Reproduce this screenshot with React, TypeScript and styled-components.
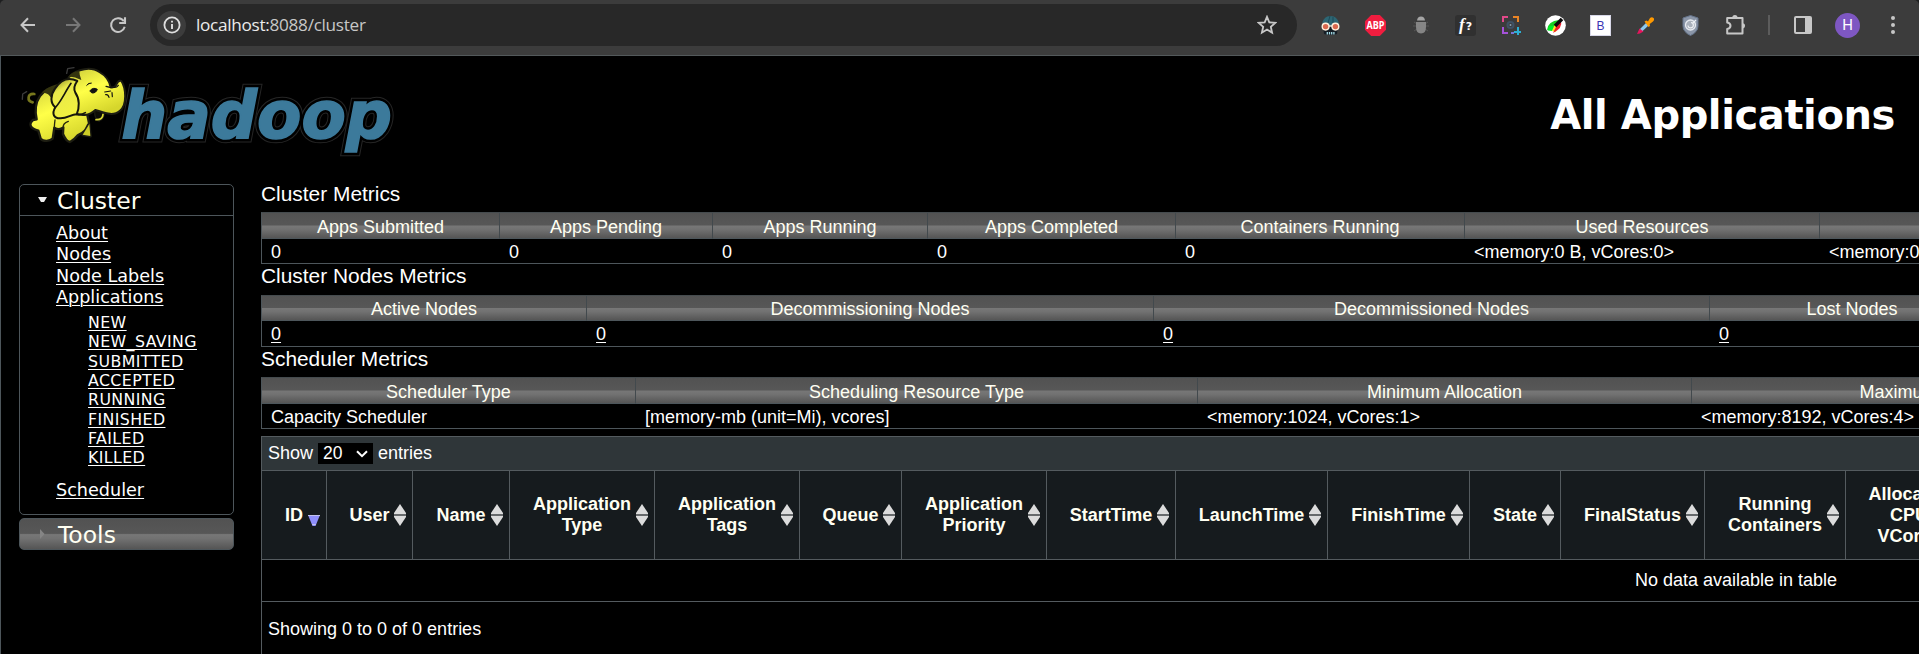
import React from "react";
import styled, { createGlobalStyle } from "styled-components";

const ARIAL = '"Liberation Sans", Arial, sans-serif';
const VERDANA = '"DejaVu Sans", Verdana, sans-serif';
const LINE = "#4d565b";
const GLOSS = "linear-gradient(#525252 0%, #575757 48%, #777 52%, #727272 65%, #555 100%)";

const GlobalStyle = createGlobalStyle`
  *, *::before, *::after { box-sizing: border-box; }
  body { margin: 0; background: #000; color: #fff; overflow: hidden; }
`;

const Window = styled.div`
  width: 1919px;
  height: 654px;
  overflow: hidden;
  display: flex;
  flex-direction: column;
  background: #000;
`;

/* ---------- browser bar ---------- */

const BarBackdrop = styled.div`
  flex: none;
  background: #1e1f20;
`;

const BrowserBar = styled.div`
  height: 55px;
  padding: 0 4px 5px 5px;
  display: flex;
  align-items: center;
  background: #3c3c3c;
  border-radius: 5px 5px 0 0;
`;

const Slot = styled.div<{ $w?: number }>`
  width: ${(p) => p.$w ?? 45}px;
  flex: none;
  display: flex;
  align-items: center;
  justify-content: center;
  svg { display: block; }
`;

const AddressField = styled.div`
  width: 1147px;
  height: 42px;
  margin: 0 11px 0 10px;
  padding: 0 20px 0 7px;
  border-radius: 21px;
  background: #282828;
  display: flex;
  align-items: center;
`;

const SiteInfo = styled.div`
  width: 29px;
  height: 29px;
  border-radius: 50%;
  background: #3c3c3c;
  display: flex;
  align-items: center;
  justify-content: center;
`;

const Url = styled.span`
  flex: 1;
  margin-left: 10px;
  font: 17.2px/24px "Open Sans", "Noto Sans", sans-serif;
  letter-spacing: -0.3px;
  color: #c7c7c7;
  span { color: #ececec; }
`;

const Divider = styled.div`
  width: 2px;
  height: 20px;
  background: #5c5c5c;
`;

const Avatar = styled.div`
  width: 25px;
  height: 25px;
  border-radius: 50%;
  background: #7e57c2;
  color: #fff;
  font: 15px/25px Roboto, sans-serif;
  text-align: center;
`;

const LetterTile = styled.div`
  width: 21px;
  height: 21px;
  background: #fff;
  border: 1px solid #d8d8e8;
  color: #3a35b5;
  font: 12px/20px ${ARIAL};
  text-align: center;
`;

const FontTile = styled.div`
  width: 21px;
  height: 21px;
  border-radius: 3px;
  background: #303030;
  color: #fff;
  font: italic bold 17px/19px "Liberation Serif", serif;
  text-align: center;
  span { font: bold 11px/19px "DejaVu Sans", sans-serif; margin-left: 1px; }
`;

/* ---------- page ---------- */

const Page = styled.div`
  flex: 1;
  border-top: 1px solid #53595b;
  border-left: 1px solid ${LINE};
  overflow: hidden;
`;

const Header = styled.header`
  height: 128px;
  padding: 4px 24px 0 19px;
  display: flex;
  justify-content: space-between;
  align-items: flex-start;
`;

const Title = styled.h1`
  margin: 31px 0 0;
  font: bold 40px/48px ${VERDANA};
  letter-spacing: -0.4px;
  white-space: nowrap;
`;

const Columns = styled.div`
  display: flex;
  align-items: flex-start;
  padding-left: 18px;
`;

const Sidebar = styled.nav`
  width: 215px;
  flex: none;
  margin-right: 27px;
  font-family: ${VERDANA};
`;

const Panel = styled.div`
  height: 331px;
  margin-bottom: 3px;
  border: 1px solid ${LINE};
  border-radius: 5px;
`;

const PanelHead = styled.div<{ $closed?: boolean }>`
  height: ${(p) => (p.$closed ? 32 : 31)}px;
  padding-left: ${(p) => (p.$closed ? 19 : 18)}px;
  display: flex;
  align-items: center;
  gap: ${(p) => (p.$closed ? 13 : 10)}px;
  font-size: 23.5px;
  color: #fffff2;
  border: ${(p) => (p.$closed ? `1px solid ${LINE}` : "0")};
  border-bottom: 1px solid ${LINE};
  border-radius: ${(p) => (p.$closed ? "5px" : "0")};
  background: ${(p) => (p.$closed ? GLOSS : "none")};
  span { padding-top: 2px; }
`;

const LinkList = styled.ul<{ $nested?: boolean }>`
  margin: 0;
  list-style: none;
  padding: ${(p) => (p.$nested ? "5px 0 12px 32px" : "7px 0 0 36px")};
  font-size: ${(p) => (p.$nested ? 15.8 : 17.6)}px;
  line-height: ${(p) => (p.$nested ? 19.3 : 21.3)}px;
  letter-spacing: ${(p) => (p.$nested ? 0.4 : 0)}px;
`;

const PageLink = styled.a`
  color: #fff;
  text-decoration: underline;
  text-decoration-thickness: 1px;
  text-underline-offset: 2px;
`;

const Main = styled.main`
  width: 2950px;
  flex: none;
  font: 18px/21px ${ARIAL};
`;

const SectionTitle = styled.div<{ $h: number; $line: number }>`
  height: ${(p) => p.$h}px;
  font-size: 20.9px;
  line-height: ${(p) => p.$line}px;
`;

const Metrics = styled.div<{ $cols: string }>`
  display: grid;
  grid-template-columns: ${(p) => p.$cols};
  border: 1px solid ${LINE};
  border-top-color: #454b4e;
`;

const MetricHead = styled.div<{ $h: number }>`
  height: ${(p) => p.$h}px;
  padding-top: ${(p) => (p.$h > 25 ? 3 : 2)}px;
  display: flex;
  align-items: center;
  justify-content: center;
  background: ${GLOSS};
  color: #fffff2;
  border-right: 1px solid #42494d;
  border-bottom: 1px solid ${LINE};
  white-space: nowrap;
`;

const MetricCell = styled.div<{ $h: number }>`
  height: ${(p) => p.$h}px;
  padding: 2px 0 0 9px;
  display: flex;
  align-items: center;
  white-space: nowrap;
`;

const AppsTable = styled.div`
  margin-top: 7px;
  border: 1px solid #545b5f;
  height: 260px;
`;

const Toolbar = styled.div`
  height: 34px;
  padding-left: 6px;
  display: flex;
  align-items: center;
  gap: 5px;
  background: #2f3639;
  border-bottom: 1px solid #545b5f;
`;

const PageSize = styled.div`
  width: 55px;
  height: 21px;
  padding: 0 5px;
  display: flex;
  align-items: center;
  justify-content: space-between;
  background: #000;
  font-size: 17.5px;
`;

const AppsHead = styled.div`
  display: flex;
  height: 89px;
  background: #161b1e;
  border-bottom: 1px solid #545b5f;
`;

const AppsHeadCell = styled.div<{ $w: number }>`
  position: relative;
  width: ${(p) => p.$w}px;
  flex: none;
  display: flex;
  align-items: center;
  justify-content: center;
  border-right: 1px solid #545b5f;
  color: #fffff2;
  font-weight: bold;
  text-align: center;
  white-space: pre;
`;

const SortMark = styled.svg`
  position: absolute;
  right: 6px;
  top: 33px;
`;

const EmptyRow = styled.div`
  height: 42px;
  display: flex;
  align-items: center;
  justify-content: center;
  border-bottom: 1px solid #545b5f;
`;

const TableInfo = styled.div`
  padding: 17px 0 0 6px;
`;

/* ---------- drawings ---------- */

const LogoDrawing = styled.svg`
  display: block;
  overflow: visible;
`;

const HadoopLogo = () => (
  <LogoDrawing width="374" height="100" viewBox="60 180 1122 300">
    <defs>
      <linearGradient id="hide" x1="0" y1="0" x2="0.5" y2="1">
        <stop offset="0" stopColor="#c9c93a" />
        <stop offset="0.5" stopColor="#ffff48" />
        <stop offset="1" stopColor="#d6d62c" />
      </linearGradient>
      <linearGradient id="ear" x1="0" y1="0" x2="0.4" y2="1">
        <stop offset="0" stopColor="#77771f" />
        <stop offset="0.35" stopColor="#e9e94a" />
        <stop offset="1" stopColor="#f2f240" />
      </linearGradient>
    </defs>
    <g fontFamily="DejaVu Sans" fontWeight="bold" fontStyle="italic" fontSize="200" strokeLinejoin="miter">
      <text x="364" y="414" textLength="812" lengthAdjust="spacingAndGlyphs" fill="none" stroke="#262626" strokeWidth="26">hadoop</text>
      <text x="364" y="414" textLength="812" lengthAdjust="spacingAndGlyphs" fill="none" stroke="#000" strokeWidth="20">hadoop</text>
      <text x="364" y="414" textLength="812" lengthAdjust="spacingAndGlyphs" fill="#3c7a9b" stroke="#3c7a9b" strokeWidth="5">hadoop</text>
    </g>
    <g strokeLinejoin="round" strokeLinecap="round">
      <path d="M200 220 L203 206 L222 203 M67 298 L68 282 L80 275" fill="none" stroke="#3b3b3b" strokeWidth="4" />
      <path d="M103 282 C82 280 80 303 98 307" fill="none" stroke="#77771c" strokeWidth="8" />
      <path d="M180 262 C125 258 98 305 110 358 L99 360 C85 372 90 385 115 392 L122 416 C130 426 150 424 158 416 L163 383 Q178 392 190 382 L189 402 Q198 424 210 426 Q222 420 234 405 Q258 396 265 373 L248 405 L272 409 L268 374 L262 345 L285 325 L300 250 Z" fill="url(#hide)" stroke="#1d1d12" strokeWidth="7" />
      <path d="M268 372 L248 404 L271 408 Z" fill="#cccc27" />
      <path d="M125 278 C146 256 172 252 196 248 C175 262 160 276 152 292 C147 281 136 278 125 278 Z" fill="#35350f" />
      <path d="M284 328 Q283 362 298 363 Q314 356 312 338 Z" fill="#0d0d06" stroke="#1d1d12" strokeWidth="4" />
      <path d="M288 359 Q308 360 309 343" fill="none" stroke="#dada35" strokeWidth="5" />
      <path d="M206 232 C232 204 275 200 298 216 C316 226 328 242 332 262 Q346 264 350 252 Q355 240 364 243 C378 264 382 314 360 332 C338 352 308 336 286 330 C268 347 242 350 225 338 C205 300 200 258 206 232 Z" fill="url(#hide)" stroke="#1d1d12" strokeWidth="6" />
      <path d="M205 230 Q218 213 238 214 Q238 226 244 240 Q223 229 205 230 Z" fill="#35350f" />
      <path d="M232 243 C205 230 182 240 165 266 C150 287 151 310 166 322 C154 342 162 356 182 355 C203 355 213 343 230 343 C239 323 239 296 226 278 C220 266 225 252 232 243 Z" fill="url(#ear)" stroke="#17170d" strokeWidth="6" />
      <path d="M166 322 C180 310 194 278 213 250 M229 343 Q244 346 256 338" fill="none" stroke="#17170d" strokeWidth="5" />
      <path d="M270 272 Q280 260 292 268 Q288 280 277 279 Z M260 256 Q265 248 274 249" fill="#111" stroke="#111" strokeWidth="3" />
      <path d="M318 259 L333 263 M314 276 L332 273 M317 284 Q324 282 327 292 M337 290 L336 278 M339 262 Q350 264 355 256" fill="none" stroke="#111" strokeWidth="3.5" />
      <path d="M165 360 Q163 375 163 383 M190 382 Q188 370 205 364" fill="none" stroke="#25250e" strokeWidth="4" />
    </g>
  </LogoDrawing>
);

const Arrow = ({ flip, color }: { flip?: boolean; color: string }) => (
  <svg width="16" height="16" viewBox="0 0 16 16" transform={flip ? "scale(-1 1)" : undefined}>
    <path d="M15 8H2M8 1.3L1.5 8L8 14.7" fill="none" stroke={color} strokeWidth="2" />
  </svg>
);

const Reload = () => (
  <svg width="18" height="18" viewBox="0 0 18 18">
    <path d="M14.8 5.3A6.9 6.9 0 1 0 15.7 10.8" fill="none" stroke="#c7c7c7" strokeWidth="2" />
    <path d="M16 1.2V7H10.2" fill="none" stroke="#c7c7c7" strokeWidth="2.1" />
  </svg>
);

const Info = () => (
  <svg width="18" height="18" viewBox="0 0 18 18">
    <circle cx="9" cy="9" r="7.6" fill="none" stroke="#dedede" strokeWidth="1.8" />
    <path d="M9 8V13M9 4.7V6.6" stroke="#dedede" strokeWidth="1.9" />
  </svg>
);

const Star = () => (
  <svg width="20" height="20" viewBox="0 0 20 20">
    <path d="M10 1.8L12.3 7.3L18.3 7.8L13.8 11.8L15.1 17.7L10 14.5L4.9 17.7L6.2 11.8L1.7 7.8L7.7 7.3Z" fill="none" stroke="#c7c7c7" strokeWidth="1.8" />
  </svg>
);

const Masked = () => (
  <svg width="21" height="21" viewBox="0 0 21 21">
    <path d="M2 11C2 4 6 1 10.5 1S19 4 19 11Z" fill="#2d6674" />
    <path d="M3 11H18L17 19Q10.5 21 4 19Z" fill="#151d25" />
    <path d="M10 1L8 8M13 2V8" stroke="#1d4b57" />
    <circle cx="5.6" cy="11.6" r="3.4" fill="#d9694f" stroke="#fff0db" strokeWidth="1.4" />
    <circle cx="15.4" cy="11.6" r="3.4" fill="#d9694f" stroke="#fff0db" strokeWidth="1.4" />
    <path d="M9 11H12" stroke="#fff0db" strokeWidth="1.3" />
    <path d="M7.3 17V19.5M9.5 17V19.5M11.7 17V19.5M13.9 17V19.5" stroke="#a6dce6" strokeWidth="1.3" />
  </svg>
);

const AdBlock = () => (
  <svg width="21" height="21" viewBox="0 0 21 21">
    <path d="M6.2 0H14.8L21 6.2V14.8L14.8 21H6.2L0 14.8V6.2Z" fill="#f01d3f" />
    <text x="10.5" y="14.4" textAnchor="middle" textLength="18" lengthAdjust="spacingAndGlyphs" fontFamily="Open Sans" fontWeight="bold" fontSize="11" fill="#fff">ABP</text>
  </svg>
);

const Bug = () => (
  <svg width="18" height="18" viewBox="0 0 18 18">
    <path d="M2 6L5 8M1 10H4M2 15L5 13M16 6L13 8M17 10H14M16 15L13 13" stroke="#555" />
    <path d="M5 4.5Q5.5 .5 9 .5T13 4.5Z" fill="#a5a5a5" />
    <path d="M4 6H14V11Q14 17.5 9 17.5T4 11Z" fill="#858585" />
  </svg>
);

const Capture = () => (
  <svg width="20" height="20" viewBox="0 0 20 20" fill="none" strokeWidth="2">
    <path d="M2 7V2H7" stroke="#e2498a" />
    <path d="M12 2H17V7" stroke="#ea8425" />
    <path d="M2 12V18H7" stroke="#a552d8" />
    <path d="M10 18H13" stroke="#7773d9" />
    <path d="M17 12V20M13 17H20" stroke="#2daed3" />
    <circle cx="9.5" cy="10" r="3" stroke="#3f5265" />
    <circle cx="9.5" cy="10" r="1" fill="#8aa0b5" stroke="none" />
  </svg>
);

const ColorDisc = () => (
  <svg width="21" height="21" viewBox="0 0 21 21">
    <circle cx="10.5" cy="10.5" r="10.3" fill="#fff" />
    <path d="M2 15Q3 6 14 5L8 14Z" fill="#16cf22" />
    <path d="M2.5 15.5L4 11L10 11L7 16Z" fill="#00ef28" />
    <path d="M7 16L10 9L14 6L11 17Z" fill="#ffe320" />
    <path d="M8 18L11 12L16 6Q18 13 8 18Z" fill="#ee1d2d" />
    <path d="M10 11L17 4" stroke="#090909" strokeWidth="3.5" />
  </svg>
);

const Dropper = () => (
  <svg width="17" height="17" viewBox="0 0 17 17">
    <path d="M2 13L9 6L11.5 8.5L4.5 15Z" fill="#8bc8ef" />
    <path d="M0 17L2.5 11.5L6.5 14.5L3 16.5Z" fill="#e5155c" />
    <path d="M7.5 4.5L9.5 3.5L11 4.5L13 1Q15-.5 16.5 1T16 4.5L12.7 7L13 9L11.5 10Z" fill="#ff9900" />
  </svg>
);

const Shield = () => (
  <svg width="17" height="21" viewBox="0 0 17 21">
    <path d="M8.5 .5L16 3V11Q16 17 8.5 20.5Q1 17 1 11V3Z" fill="#8b96a8" stroke="#66758c" />
    <circle cx="8.5" cy="10" r="5" fill="#a9b0bb" stroke="#e7eaf0" strokeWidth="1.3" />
    <path d="M6 10.5A2.7 2.7 0 1 0 9 7.5M11 8L14 5" fill="none" stroke="#eef0f4" strokeWidth="1.2" />
  </svg>
);

const Puzzle = () => (
  <svg width="22" height="22" viewBox="0 0 22 22">
    <path d="M2.2 4H17.5V19.5H2.2V15Q5.5 14.5 5.5 11.8T2.2 8.5Z" fill="none" stroke="#c7c7c7" strokeWidth="2" strokeLinejoin="round" />
    <path d="M7.3 3.5A2.6 2.6 0 0 1 12.5 3.5ZM18 9.3A2.6 2.6 0 0 1 18 14.4Z" fill="#c7c7c7" />
  </svg>
);

const SidePanel = () => (
  <svg width="18" height="18" viewBox="0 0 18 18">
    <rect x="1" y="1" width="16" height="16" rx="1" fill="none" stroke="#c7c7c7" strokeWidth="2" />
    <path d="M11 1H17V17H11Z" fill="#c7c7c7" />
  </svg>
);

const Dots = () => (
  <svg width="4" height="18" viewBox="0 0 4 18" fill="#c7c7c7">
    <circle cx="2" cy="2" r="2" />
    <circle cx="2" cy="9" r="2" />
    <circle cx="2" cy="16" r="2" />
  </svg>
);

const Sort = ({ active }: { active?: boolean }) => (
  <SortMark width="12" height="22" viewBox="0 0 12 22">
    {active ? (
      <>
        <path d="M0 11H12L7.5 22H4.5Z" fill="#8f8ffb" />
        <path d="M0 11.5H12M4.2 20.5H7.8" stroke="#c2c2ee" />
      </>
    ) : (
      <>
        <path d="M6 0L12 9V13L6 22L0 13V9Z" fill="#dcdcdc" />
        <path d="M0 11H12" stroke="#66696b" strokeWidth="2" />
      </>
    )}
  </SortMark>
);

/* ---------- data ---------- */

const metricTables = [
  {
    title: "Cluster Metrics", titleHeight: 28, titleLine: 20, headHeight: 26, cellHeight: 24, linked: false,
    cols: "238px 213px 215px 248px 289px 355px 1fr",
    heads: ["Apps Submitted", "Apps Pending", "Apps Running", "Apps Completed", "Containers Running", "Used Resources", ""],
    cells: ["0", "0", "0", "0", "0", "<memory:0 B, vCores:0>", "<memory:0 B, vCores:0>"],
  },
  {
    title: "Cluster Nodes Metrics", titleHeight: 31, titleLine: 23, headHeight: 25, cellHeight: 25, linked: true,
    cols: "325px 567px 556px 285px 1fr",
    heads: ["Active Nodes", "Decommissioning Nodes", "Decommissioned Nodes", "Lost Nodes", ""],
    cells: ["0", "0", "0", "0", ""],
  },
  {
    title: "Scheduler Metrics", titleHeight: 30, titleLine: 23, headHeight: 26, cellHeight: 24, linked: false,
    cols: "374px 562px 494px 496px 1fr",
    heads: ["Scheduler Type", "Scheduling Resource Type", "Minimum Allocation", "Maximum Allocation", ""],
    cells: ["Capacity Scheduler", "[memory-mb (unit=Mi), vcores]", "<memory:1024, vCores:1>", "<memory:8192, vCores:4>", ""],
  },
];

const appColumns: [string, number][] = [
  ["ID", 65], ["User", 86], ["Name", 97], ["Application\nType", 145], ["Application\nTags", 145],
  ["Queue", 102], ["Application\nPriority", 145], ["StartTime", 129], ["LaunchTime", 152],
  ["FinishTime", 142], ["State", 91], ["FinalStatus", 144], ["Running\nContainers", 141],
  ["Allocated\nCPU\nVCores", 127],
];

const states = ["NEW", "NEW_SAVING", "SUBMITTED", "ACCEPTED", "RUNNING", "FINISHED", "FAILED", "KILLED"];

const NavItem = ({ children }: { children: string }) => (
  <li>
    <PageLink>{children}</PageLink>
  </li>
);

export default function App() {
  return (
    <Window>
      <GlobalStyle />
      <BarBackdrop>
        <BrowserBar>
          <Slot><Arrow color="#c7c7c7" /></Slot>
          <Slot><Arrow flip color="#777" /></Slot>
          <Slot><Reload /></Slot>
          <AddressField>
            <SiteInfo><Info /></SiteInfo>
            <Url><span>localhost:</span>8088/cluster</Url>
            <Star />
          </AddressField>
          <Slot><Masked /></Slot>
          <Slot><AdBlock /></Slot>
          <Slot><Bug /></Slot>
          <Slot><FontTile>f<span>?</span></FontTile></Slot>
          <Slot><Capture /></Slot>
          <Slot><ColorDisc /></Slot>
          <Slot><LetterTile>B</LetterTile></Slot>
          <Slot><Dropper /></Slot>
          <Slot><Shield /></Slot>
          <Slot><Puzzle /></Slot>
          <Slot $w={22}><Divider /></Slot>
          <Slot><SidePanel /></Slot>
          <Slot><Avatar>H</Avatar></Slot>
          <Slot><Dots /></Slot>
        </BrowserBar>
      </BarBackdrop>
      <Page>
        <Header>
          <HadoopLogo />
          <Title>All Applications</Title>
        </Header>
        <Columns>
          <Sidebar>
            <Panel>
              <PanelHead>
                <svg width="9" height="6" viewBox="0 0 9 6"><path d="M0 0H9L6 5H3Z" fill="#eee" /></svg>
                <span>Cluster</span>
              </PanelHead>
              <LinkList>
                <NavItem>About</NavItem>
                <NavItem>Nodes</NavItem>
                <NavItem>Node Labels</NavItem>
                <NavItem>Applications</NavItem>
                <LinkList $nested>
                  {states.map((s) => <NavItem key={s}>{s}</NavItem>)}
                </LinkList>
                <NavItem>Scheduler</NavItem>
              </LinkList>
            </Panel>
            <PanelHead $closed>
              <svg width="6" height="10" viewBox="0 0 6 10"><path d="M1 0L5.5 5L1 10Z" fill="#858585" /></svg>
              <span>Tools</span>
            </PanelHead>
          </Sidebar>
          <Main>
            {metricTables.map((t) => (
              <React.Fragment key={t.title}>
                <SectionTitle $h={t.titleHeight} $line={t.titleLine}>{t.title}</SectionTitle>
                <Metrics $cols={t.cols}>
                  {t.heads.map((h, i) => <MetricHead key={i} $h={t.headHeight}>{h}</MetricHead>)}
                  {t.cells.map((c, i) => (
                    <MetricCell key={i} $h={t.cellHeight}>
                      {t.linked && c ? <PageLink>{c}</PageLink> : c}
                    </MetricCell>
                  ))}
                </Metrics>
              </React.Fragment>
            ))}
            <AppsTable>
              <Toolbar>
                Show
                <PageSize>
                  20
                  <svg width="12" height="8" viewBox="0 0 12 8"><path d="M1 1.2L6 6.2L11 1.2" fill="none" stroke="#fff" strokeWidth="2" /></svg>
                </PageSize>
                entries
              </Toolbar>
              <AppsHead>
                {appColumns.map(([name, w], i) => (
                  <AppsHeadCell key={i} $w={w}>
                    {name}
                    <Sort active={i === 0} />
                  </AppsHeadCell>
                ))}
              </AppsHead>
              <EmptyRow>No data available in table</EmptyRow>
              <TableInfo>Showing 0 to 0 of 0 entries</TableInfo>
            </AppsTable>
          </Main>
        </Columns>
      </Page>
    </Window>
  );
}
